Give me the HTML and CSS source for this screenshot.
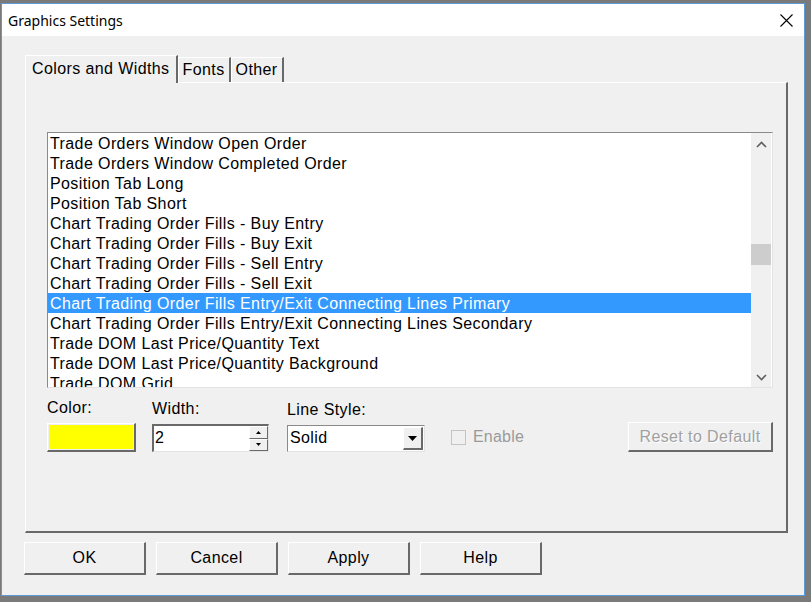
FILE: index.html
```html
<!DOCTYPE html>
<html lang="en">
<head>
    <meta charset="UTF-8">
    <title>Graphics Settings</title>
    <link rel="stylesheet" href="styles.css">
</head>
<body>
    <div class="window">
        <div class="titlebar">
            <span class="title">Graphics Settings</span>
            <svg class="close" width="13" height="13" viewBox="0 0 13 13">
                <path d="M0.5 0.5 L12.5 12.5 M12.5 0.5 L0.5 12.5" stroke="#000" stroke-width="1.1" fill="none"/>
            </svg>
        </div>

        <div class="content">
            <div class="tabs">
                <div class="tab active">Colors and Widths</div>
                <div class="tab">Fonts</div>
                <div class="tab">Other</div>
            </div>

            <div class="panel">
                <div class="listbox">
                    <div class="items">
                        <div class="item">Trade Orders Window Open Order</div>
                        <div class="item">Trade Orders Window Completed Order</div>
                        <div class="item">Position Tab Long</div>
                        <div class="item">Position Tab Short</div>
                        <div class="item">Chart Trading Order Fills - Buy Entry</div>
                        <div class="item">Chart Trading Order Fills - Buy Exit</div>
                        <div class="item">Chart Trading Order Fills - Sell Entry</div>
                        <div class="item">Chart Trading Order Fills - Sell Exit</div>
                        <div class="item selected">Chart Trading Order Fills Entry/Exit Connecting Lines Primary</div>
                        <div class="item">Chart Trading Order Fills Entry/Exit Connecting Lines Secondary</div>
                        <div class="item">Trade DOM Last Price/Quantity Text</div>
                        <div class="item">Trade DOM Last Price/Quantity Background</div>
                        <div class="item">Trade DOM Grid</div>
                    </div>
                    <div class="scrollbar">
                        <svg class="arrow" width="11" height="7" viewBox="0 0 11 7">
                            <path d="M1 6 L5.5 1.5 L10 6" stroke="#606060" stroke-width="1.6" fill="none"/>
                        </svg>
                        <div class="thumb"></div>
                        <svg class="arrow down" width="11" height="7" viewBox="0 0 11 7">
                            <path d="M1 1 L5.5 5.5 L10 1" stroke="#606060" stroke-width="1.6" fill="none"/>
                        </svg>
                    </div>
                </div>

                <div class="controls">
                    <div class="field color-field">
                        <label>Color:</label>
                        <div class="swatch"><div class="swatch-fill"></div></div>
                    </div>
                    <div class="field width-field">
                        <label>Width:</label>
                        <div class="spinner">
                            <span class="value">2</span>
                            <div class="spin-buttons">
                                <div class="spin-btn">
                                    <svg width="5" height="3" viewBox="0 0 5 3"><path d="M0 3 L2.5 0 L5 3 Z" fill="#000"/></svg>
                                </div>
                                <div class="spin-btn">
                                    <svg width="5" height="3" viewBox="0 0 5 3"><path d="M0 0 L2.5 3 L5 0 Z" fill="#000"/></svg>
                                </div>
                            </div>
                        </div>
                    </div>
                    <div class="field style-field">
                        <label>Line Style:</label>
                        <div class="select">
                            <span class="value">Solid</span>
                            <div class="drop-btn">
                                <svg width="9" height="5" viewBox="0 0 9 5"><path d="M0 0 L4.5 5 L9 0 Z" fill="#000"/></svg>
                            </div>
                        </div>
                    </div>
                    <div class="check">
                        <span class="box"></span>
                        <span class="check-label">Enable</span>
                    </div>
                    <div class="reset">Reset to Default</div>
                </div>
            </div>

            <div class="buttons">
                <div class="btn">OK</div>
                <div class="btn">Cancel</div>
                <div class="btn">Apply</div>
                <div class="btn">Help</div>
            </div>
        </div>
    </div>
</body>
</html>
```

FILE: styles.css
```css
* {
    margin: 0;
    padding: 0;
    box-sizing: border-box;
}

body {
    background: #7a7a7a;
    font-family: "Liberation Sans", Arial, sans-serif;
    letter-spacing: 0.4px;
    width: 811px;
    height: 602px;
    overflow: hidden;
}

.window {
    margin: 3px 0 0 1px;
    width: 804px;
    height: 593px;
    border: 1px solid #5b9bd5;
    background: #f0f0f0;
}

.titlebar {
    height: 32px;
    background: #fff;
    display: flex;
    align-items: center;
    justify-content: space-between;
    padding: 0 11px 0 6px;
}

.title {
    font-family: "Noto Sans", sans-serif;
    font-size: 14px;
    letter-spacing: 0;
    color: #000;
}

.close {
    display: block;
}

.content {
    padding: 18px 0 0 23px;
}

/* tabs */
.tabs {
    display: flex;
    align-items: flex-end;
    height: 28px;
    position: relative;
    z-index: 1;
}

.tab {
    height: 25px;
    padding: 0 4px;
    font-size: 16px;
    line-height: 23px;
    color: #000;
    border-top: 1px solid #fff;
    border-left: 1px solid #fff;
    border-right: 2px solid #696969;
    background: #f0f0f0;
}

.tab.active {
    height: 28px;
    padding: 0 6px;
    line-height: 26px;
    margin-bottom: -1px;
}

.panel {
    width: 763px;
    height: 451px;
    border-top: 1px solid #fff;
    border-left: 1px solid #fff;
    border-right: 2px solid #696969;
    border-bottom: 2px solid #696969;
    padding: 49px 0 0 21px;
}

/* listbox */
.listbox {
    width: 726px;
    height: 256px;
    background: #fff;
    border-top: 1px solid #8a8a8a;
    border-left: 1px solid #8a8a8a;
    border-right: 1px solid #e3e3e3;
    border-bottom: 1px solid #e3e3e3;
    display: flex;
    overflow: hidden;
}

.items {
    flex: 1;
    overflow: hidden;
}

.item {
    height: 20px;
    line-height: 21px;
    padding-left: 2px;
    font-size: 16px;
    color: #000;
    white-space: nowrap;
}

.item.selected {
    background: #3399ff;
    color: #fff;
}

.scrollbar {
    width: 20px;
    margin-right: 1px;
    background: #f0f0f0;
    display: flex;
    flex-direction: column;
    align-items: center;
}

.arrow {
    display: block;
    margin-top: 8px;
}

.arrow.down {
    margin-top: auto;
    margin-bottom: 6px;
}

.thumb {
    width: 20px;
    height: 21px;
    margin-top: 96px;
    background: #cdcdcd;
}

/* controls */
.controls {
    display: flex;
    align-items: flex-end;
    margin-top: 10px;
}

.field label {
    display: block;
    font-size: 16px;
    line-height: 20px;
    margin-bottom: 5px;
    color: #000;
}

.color-field {
    width: 105px;
}

.swatch {
    width: 89px;
    height: 29px;
    border-top: 1px solid #fff;
    border-left: 1px solid #fff;
    border-right: 2px solid #696969;
    border-bottom: 2px solid #696969;
    padding: 1px;
}

.swatch-fill {
    width: 100%;
    height: 100%;
    background: #ffff00;
}

.width-field {
    width: 135px;
}

.spinner {
    width: 117px;
    height: 28px;
    background: #fff;
    border-top: 2px solid #696969;
    border-left: 2px solid #696969;
    border-right: 1px solid #e3e3e3;
    border-bottom: 1px solid #e3e3e3;
    display: flex;
    justify-content: space-between;
}

.spinner .value,
.select .value {
    font-size: 16px;
    line-height: 24px;
    padding-left: 1px;
    color: #000;
}

.spin-buttons {
    width: 19px;
    display: flex;
    flex-direction: column;
}

.spin-btn {
    flex: 1;
    display: flex;
    align-items: center;
    justify-content: center;
    background: #f0f0f0;
    border-top: 1px solid #fff;
    border-left: 1px solid #fff;
    border-right: 1px solid #696969;
    border-bottom: 1px solid #696969;
}

.spin-btn svg {
    display: block;
}

.style-field {
    width: 164px;
}

.select {
    width: 138px;
    height: 27px;
    background: #fff;
    border-top: 1px solid #8a8a8a;
    border-left: 1px solid #8a8a8a;
    border-right: 1px solid #e3e3e3;
    border-bottom: 1px solid #e3e3e3;
    display: flex;
    justify-content: space-between;
}

.select .value {
    padding-left: 2px;
}

.drop-btn {
    width: 20px;
    margin: 1px 1px 1px 0;
    background: #f0f0f0;
    border-top: 1px solid #fff;
    border-left: 1px solid #fff;
    border-right: 2px solid #696969;
    border-bottom: 2px solid #696969;
    display: flex;
    align-items: center;
    justify-content: center;
}

.drop-btn svg {
    display: block;
}

.check {
    display: flex;
    align-items: center;
    height: 26px;
    margin-bottom: 2px;
}

.box {
    width: 15px;
    height: 15px;
    border: 1px solid #c4c4c4;
    background: #f0f0f0;
}

.check-label {
    margin-left: 7px;
    font-size: 16px;
    letter-spacing: 0.2px;
    color: #9a9a9a;
}

.reset {
    margin-left: auto;
    margin-right: 13px;
    width: 145px;
    height: 30px;
    border-top: 1px solid #fff;
    border-left: 1px solid #fff;
    border-right: 2px solid #696969;
    border-bottom: 2px solid #696969;
    font-size: 16px;
    line-height: 27px;
    text-align: center;
    color: #a0a0a0;
    text-shadow: 1px 1px 0 #fff;
}

/* dialog buttons */
.buttons {
    display: flex;
    gap: 10px;
    margin-top: 9px;
    margin-left: -1px;
}

.btn {
    width: 122px;
    height: 33px;
    border-top: 1px solid #fff;
    border-left: 1px solid #fff;
    border-right: 2px solid #696969;
    border-bottom: 2px solid #696969;
    font-size: 16px;
    line-height: 30px;
    text-align: center;
    color: #000;
}
```
